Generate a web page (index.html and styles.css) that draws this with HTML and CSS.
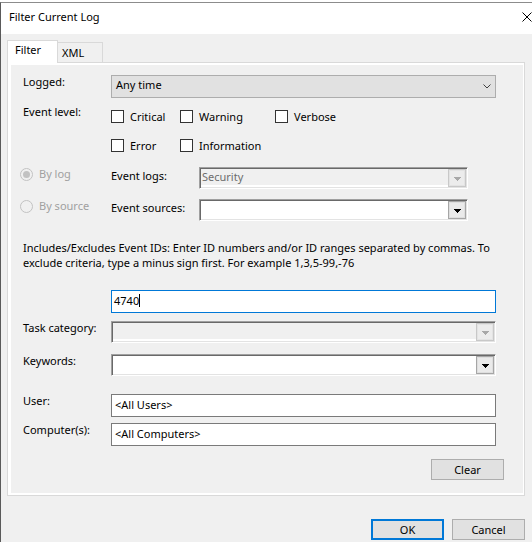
FILE: index.html
```html
<!DOCTYPE html>
<html>
<head>
<meta charset="utf-8">
<title>Filter Current Log</title>
<link rel="stylesheet" href="styles.css">
</head>
<body>
<div class="window">
  <div class="titlebar">
    <span class="title">Filter Current Log</span>
    <svg class="close" width="10" height="10" viewBox="0 0 10 10"><path d="M0.5 0.5L9.5 9.5M9.5 0.5L0.5 9.5" stroke="#000" stroke-width="1" fill="none"/></svg>
  </div>
  <div class="client">
    <div class="tabs">
      <div class="tab tab-active">Filter</div>
      <div class="tab">XML</div>
    </div>
    <div class="tabpage">
      <div class="page-inner">
        <div class="row row-logged">
          <div class="label">Logged:</div>
          <div class="dropdown">
            <span class="dropdown-text">Any time</span>
            <svg class="chevron" width="8" height="5" viewBox="0 0 8 5"><path d="M0.5 0.5L4 4L7.5 0.5" stroke="#404040" stroke-width="1" fill="none"/></svg>
          </div>
        </div>
        <div class="row row-level">
          <div class="label label-level">Event level:</div>
          <div class="checks">
            <div class="check"><span class="box"></span>Critical</div>
            <div class="check"><span class="box"></span>Warning</div>
            <div class="check"><span class="box"></span>Verbose</div>
            <div class="check"><span class="box"></span>Error</div>
            <div class="check"><span class="box"></span>Information</div>
          </div>
        </div>
        <div class="row row-bylog">
          <div class="radio-opt">
            <svg class="radio" width="13" height="13" viewBox="0 0 13 13"><circle cx="6.5" cy="6.5" r="6" stroke="#c2c2c2" stroke-width="1" fill="none"/><circle cx="6.5" cy="6.5" r="3.5" fill="#c2c2c2"/></svg>
            <span>By log</span>
          </div>
          <div class="sublabel">Event logs:</div>
          <div class="combo combo-short combo-disabled">
            <span class="combo-text">Security</span>
            <span class="combo-btn"><svg width="7" height="4" viewBox="0 0 7 4" shape-rendering="crispEdges"><path d="M0 0h7v1H0zM1 1h5v1H1zM2 2h3v1H2zM3 3h1v1H3z"/></svg></span>
          </div>
        </div>
        <div class="row row-bysource">
          <div class="radio-opt">
            <svg class="radio" width="13" height="13" viewBox="0 0 13 13"><circle cx="6.5" cy="6.5" r="6" stroke="#c2c2c2" stroke-width="1" fill="none"/></svg>
            <span>By source</span>
          </div>
          <div class="sublabel">Event sources:</div>
          <div class="combo combo-short">
            <span class="combo-text"></span>
            <span class="combo-btn"><svg width="7" height="4" viewBox="0 0 7 4" shape-rendering="crispEdges"><path d="M0 0h7v1H0zM1 1h5v1H1zM2 2h3v1H2zM3 3h1v1H3z"/></svg></span>
          </div>
        </div>
        <p class="note">Includes/Excludes Event IDs: Enter ID numbers and/or ID ranges separated by commas. To<br>exclude criteria, type a minus sign first. For example 1,3,5-99,-76</p>
        <div class="row row-ids">
          <div class="textbox textbox-focus">4740<span class="caret"></span></div>
        </div>
        <div class="row row-task">
          <div class="label">Task category:</div>
          <div class="combo combo-wide combo-disabled">
            <span class="combo-text"></span>
            <span class="combo-btn"><svg width="7" height="4" viewBox="0 0 7 4" shape-rendering="crispEdges"><path d="M0 0h7v1H0zM1 1h5v1H1zM2 2h3v1H2zM3 3h1v1H3z"/></svg></span>
          </div>
        </div>
        <div class="row row-keywords">
          <div class="label">Keywords:</div>
          <div class="combo combo-wide">
            <span class="combo-text"></span>
            <span class="combo-btn"><svg width="7" height="4" viewBox="0 0 7 4" shape-rendering="crispEdges"><path d="M0 0h7v1H0zM1 1h5v1H1zM2 2h3v1H2zM3 3h1v1H3z"/></svg></span>
          </div>
        </div>
        <div class="row row-user">
          <div class="label">User:</div>
          <div class="textbox">&lt;All Users&gt;</div>
        </div>
        <div class="row row-computer">
          <div class="label">Computer(s):</div>
          <div class="textbox">&lt;All Computers&gt;</div>
        </div>
        <div class="row row-clear">
          <button class="btn">Clear</button>
        </div>
      </div>
    </div>
    <div class="footer">
      <button class="btn btn-default">OK</button>
      <button class="btn">Cancel</button>
    </div>
  </div>
</div>
</body>
</html>
```
FILE: styles.css
```css
* {
  box-sizing: border-box;
}

html, body {
  margin: 0;
  padding: 0;
}

body {
  width: 532px;
  height: 542px;
  overflow: hidden;
  background: #ffffff;
  font-family: "Noto Sans", "Open Sans", sans-serif;
  font-size: 11px;
  line-height: 15px;
  color: #000;
}

.window {
  margin-top: 2px;
  height: 540px;
  border-left: 1px solid #5a5a5a;
  border-top: 1px solid #8c8c8c;
  background: #f0f0f0;
}

.titlebar {
  height: 31px;
  background: #ffffff;
  display: flex;
  align-items: flex-start;
  justify-content: space-between;
  padding: 6px 0 0 8px;
}

.close {
  display: block;
  margin-top: 3px;
}

.client {
  padding: 6px 0 0 6px;
}

.tabs {
  display: flex;
  align-items: flex-end;
  height: 22px;
  position: relative;
  z-index: 1;
}

.tab {
  height: 20px;
  width: 45px;
  border: 1px solid #d9d9d9;
  border-left: none;
  border-bottom: none;
  background: #f0f0f0;
  padding: 2px 0 0 4px;
}

.tab-active {
  height: 23px;
  width: 51px;
  border-left: 1px solid #d9d9d9;
  background: #ffffff;
  margin-bottom: -1px;
  padding: 1px 0 0 7px;
}

.tabpage {
  width: 518px;
  border: 1px solid #d9d9d9;
  background: #ffffff;
  padding: 2px 1px 2px 3px;
}

.page-inner {
  height: 428px;
  background: #f0f0f0;
  padding-left: 12px;
  display: flex;
  flex-direction: column;
}

.row {
  display: flex;
  align-items: flex-start;
}

.label {
  width: 88px;
  flex-shrink: 0;
  margin-top: -1px;
}

.row-logged { margin-top: 10px; }
.row-level { margin-top: 6px; }
.row-bylog { margin-top: 14px; }
.row-bysource { margin-top: 10px; }
.row-ids { margin-top: 20px; padding-left: 88px; }
.row-task { margin-top: 8px; }
.row-keywords { margin-top: 11px; }
.row-user { margin-top: 18px; }
.row-computer { margin-top: 6px; }
.row-clear { margin-top: 13px; justify-content: flex-end; padding-right: 19px; }

.label-level {
  margin-top: 0;
}

.dropdown {
  width: 385px;
  height: 23px;
  background: #e1e1e1;
  border: 1px solid #adadad;
  display: flex;
  align-items: flex-start;
  padding: 1px 0 0 4px;
}

.dropdown-text {
  flex: 1;
}

.chevron {
  display: block;
  margin: 7px 4px 0 0;
}

.checks {
  display: grid;
  grid-template-columns: 69px 95px auto;
  row-gap: 14px;
  padding-top: 5px;
}

.check {
  display: flex;
  align-items: center;
  gap: 6px;
  height: 15px;
}

.box {
  width: 13px;
  height: 13px;
  border: 1px solid #333333;
  background: #ffffff;
  flex-shrink: 0;
}

.radio-opt {
  width: 91px;
  margin-left: -3px;
  margin-top: -1px;
  display: flex;
  align-items: flex-start;
  gap: 6px;
  color: #a0a0a0;
  flex-shrink: 0;
}

.radio {
  display: block;
  margin-top: 2px;
}

.sublabel {
  width: 88px;
  flex-shrink: 0;
  margin-top: 1px;
}

.combo {
  height: 22px;
  border: 1px solid;
  border-color: #a0a0a0 #ffffff #ffffff #a0a0a0;
  box-shadow: inset 1px 1px 0 #696969, inset -1px -1px 0 #e3e3e3;
  background: #ffffff;
  padding: 1px;
  display: flex;
  align-items: flex-start;
  flex-shrink: 0;
}

.combo-short { width: 269px; }
.combo-wide { width: 385px; }

.combo-disabled {
  background: linear-gradient(to bottom, #f0f0f0 17px, #ffffff 17px);
}

.combo-text {
  flex: 1;
  padding-left: 1px;
  color: #6d6d6d;
}

.combo-btn {
  width: 18px;
  height: 18px;
  border: 1px solid #a6a6a6;
  box-shadow: inset 0 0 0 1px #dedede;
  background: #eaeaea;
  display: flex;
  justify-content: center;
  padding-top: 7px;
}

.combo-btn svg {
  display: block;
  fill: #000000;
}

.combo-disabled .combo-btn {
  border-color: #c8c8c8;
  box-shadow: inset 0 0 0 1px #e3e3e3;
  background: #ececec;
}

.combo-disabled .combo-btn svg {
  fill: #a8a8a8;
}

.note {
  margin: 19px 0 0 0;
  white-space: nowrap;
}

.textbox {
  width: 385px;
  height: 23px;
  border: 1px solid #7a7a7a;
  background: #ffffff;
  padding: 2px 0 0 3px;
  flex-shrink: 0;
}

.textbox-focus {
  border-color: #0078d7;
  padding-left: 2px;
}

.caret {
  display: inline-block;
  width: 1px;
  height: 13px;
  background: #000;
  vertical-align: -2px;
}

.btn {
  width: 73px;
  height: 21px;
  border: 1px solid #adadad;
  background: #e1e1e1;
  font-family: inherit;
  font-size: 11px;
  line-height: 15px;
  color: #000;
  padding: 0;
  margin: 0;
}

.btn-default {
  border: 2px solid #0078d7;
}

.footer {
  margin-top: 23px;
  display: flex;
  justify-content: flex-end;
  gap: 8px;
  padding-right: 7px;
}
```
